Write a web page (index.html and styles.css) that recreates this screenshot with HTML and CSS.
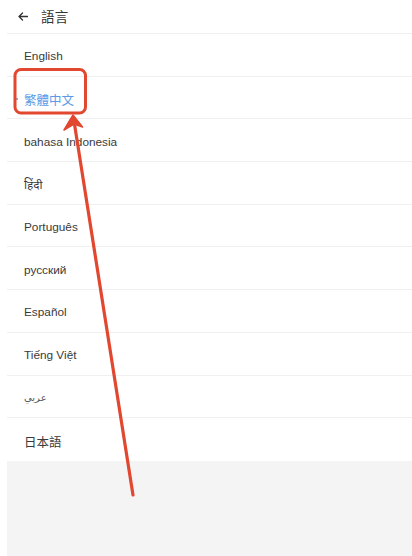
FILE: index.html
```html
<!DOCTYPE html>
<html lang="zh-Hant">
<head>
<meta charset="utf-8">
<title>語言</title>
<link rel="stylesheet" href="styles.css">
</head>
<body>
<div class="screen">
  <header class="topbar">
    <svg class="back" width="10" height="9" viewBox="0 0 10 9"><path d="M9.5 4.5H1M4.5 1L1 4.5L4.5 8" fill="none" stroke="#333" stroke-width="1.3" stroke-linecap="round" stroke-linejoin="round"/></svg>
    <h1 class="title">語言</h1>
  </header>
  <ul class="langs">
    <li class="lang">English</li>
    <li class="lang selected"><span class="dot"></span>繁體中文</li>
    <li class="lang">bahasa Indonesia</li>
    <li class="lang">हिंदी</li>
    <li class="lang">Português</li>
    <li class="lang">русский</li>
    <li class="lang">Español</li>
    <li class="lang">Tiếng Việt</li>
    <li class="lang arabic">عربي</li>
    <li class="lang">日本語</li>
  </ul>
  <div class="filler"></div>
</div>
<svg class="annot" width="412" height="556" viewBox="0 0 412 556">
  <rect x="15" y="69.5" width="70.5" height="43.5" rx="6" fill="none" stroke="#e2472f" stroke-width="3"/>
  <line x1="133" y1="495" x2="74" y2="121" stroke="#e2472f" stroke-width="3.2" stroke-linecap="round"/>
  <path d="M73 115L64 130L74 124L82.5 127Z" fill="#e2472f" stroke="#e2472f" stroke-width="1.5" stroke-linejoin="round"/>
</svg>
</body>
</html>
```
FILE: styles.css
```css
html, body {
  margin: 0;
  padding: 0;
  background: #ffffff;
}
body {
  width: 412px;
  height: 556px;
  overflow: hidden;
  position: relative;
  font-family: "Liberation Sans", "Noto Sans", "DejaVu Sans", "Noto Sans CJK TC", sans-serif;
  color: #333333;
}
.screen {
  margin-left: 7px;
  height: 556px;
  display: flex;
  flex-direction: column;
}
.topbar {
  height: 34px;
  box-sizing: border-box;
  border-bottom: 1px solid #f0f0f0;
  display: flex;
  align-items: center;
  padding-left: 11px;
  gap: 13px;
  padding-bottom: 1px;
}
.back {
  display: block;
}
.title {
  margin: 0;
  font-size: 13.5px;
  font-weight: normal;
  font-family: "Noto Sans CJK TC", "Noto Sans CJK SC", sans-serif;
  color: #333;
  letter-spacing: 0.3px;
}
.langs {
  list-style: none;
  margin: 0;
  padding: 0;
}
.lang {
  height: 42.7px;
  box-sizing: border-box;
  border-bottom: 1px solid #f0f0f0;
  display: flex;
  align-items: center;
  padding-left: 17px;
  padding-top: 3px;
  font-size: 11.8px;
  color: #3a3a3a;
  position: relative;
}
.lang:last-child {
  border-bottom: none;
}
.selected {
  color: #5a9ae6;
  font-family: "Noto Sans CJK TC", sans-serif;
  font-size: 12.5px;
}
.dot {
  position: absolute;
  left: 9px;
  top: 50%;
  width: 2px;
  height: 2px;
  margin-top: 0;
  border-radius: 50%;
  background: #5a9ae6;
}
.lang:last-child {
  font-family: "Noto Sans CJK JP", sans-serif;
  font-size: 12.5px;
}
.arabic {
  font-family: "DejaVu Sans", "Noto Sans", sans-serif;
  font-size: 10px;
  color: #555;
}
.filler {
  flex: 1;
  background: #f4f4f4;
}
.annot {
  position: absolute;
  left: 0;
  top: 0;
  pointer-events: none;
}
```
